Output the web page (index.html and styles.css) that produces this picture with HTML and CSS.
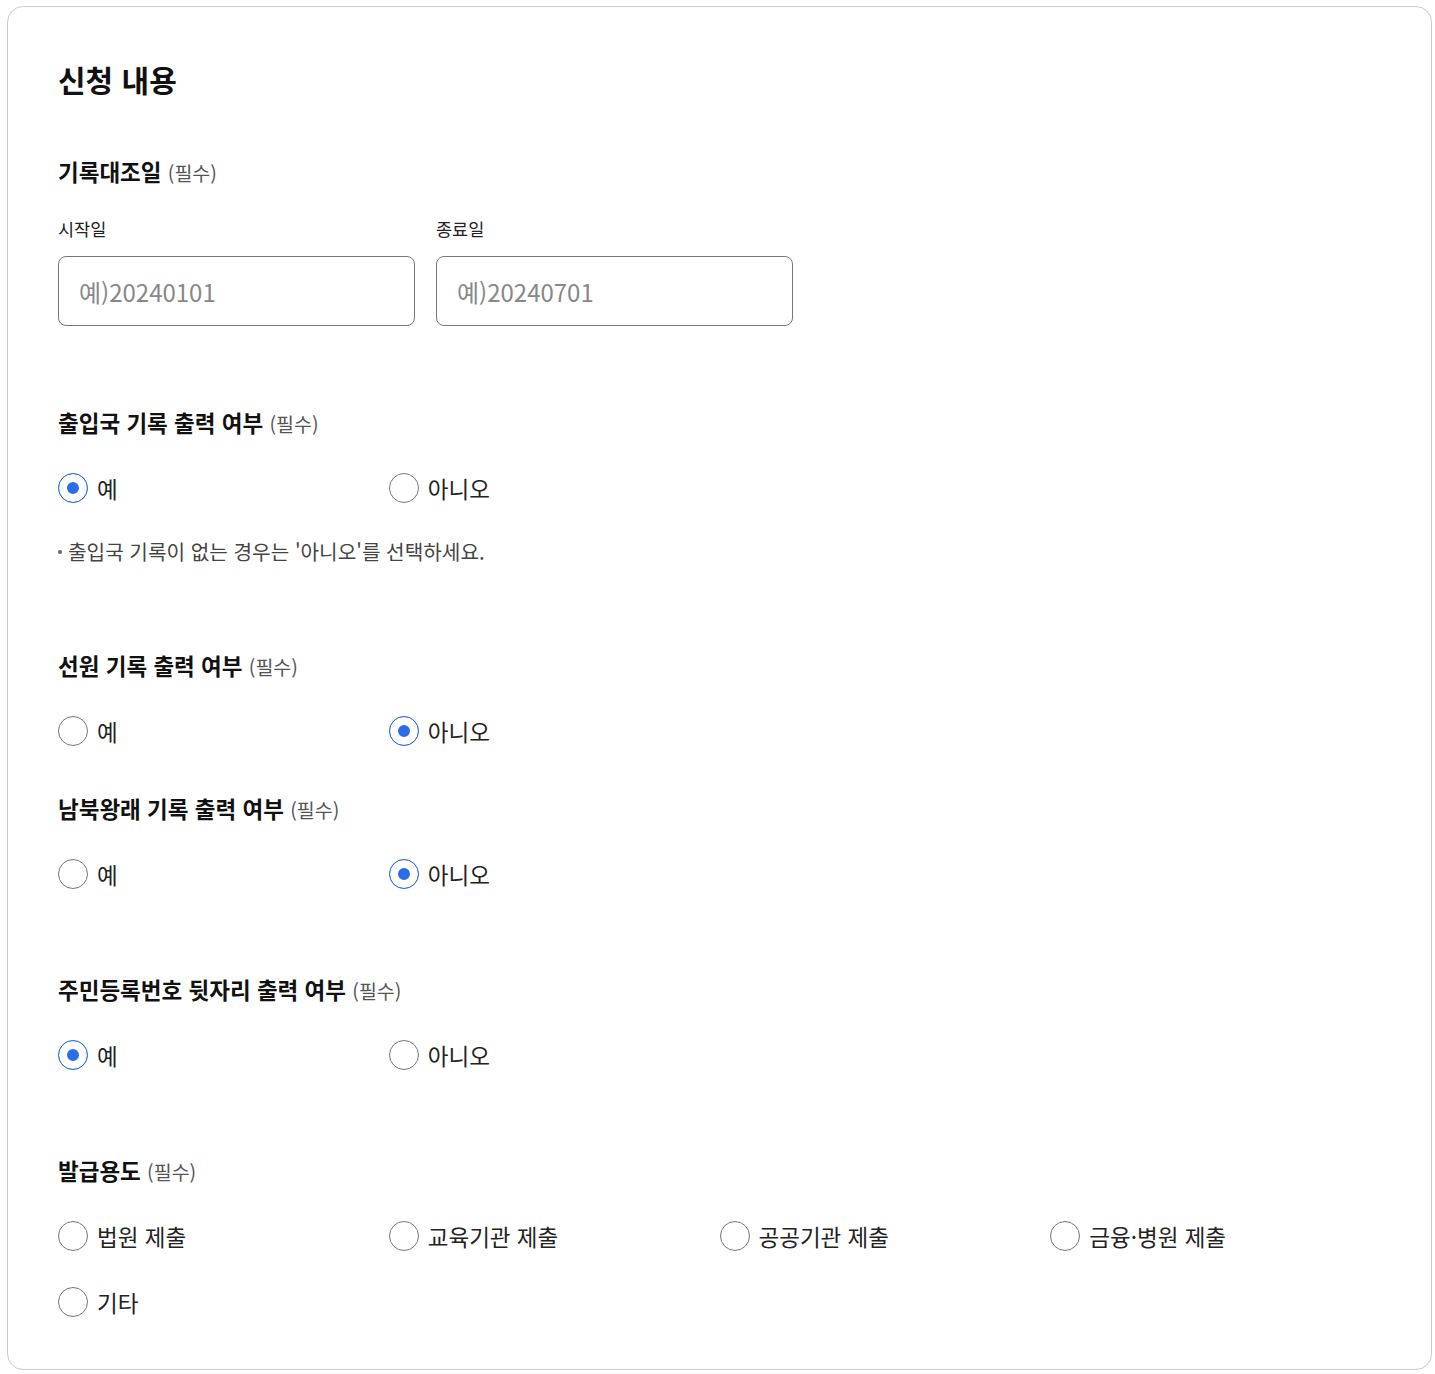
FILE: index.html
```html
<!DOCTYPE html>
<html lang="ko">
<head>
    <meta charset="UTF-8">
    <meta name="viewport" content="width=device-width, initial-scale=1.0">
    <title>신청 내용</title>
    <link rel="stylesheet" href="styles.css">
</head>
<body>
    <div class="card">
        <h2 class="card-title">신청 내용</h2>

        <!-- 기록대조일 -->
        <div class="section first">
            <h3 class="field-title">기록대조일 <span class="required">(필수)</span></h3>
            <div class="date-row">
                <div class="date-field">
                    <label for="startDate">시작일</label>
                    <input type="text" id="startDate" name="startDate" placeholder="예)20240101">
                </div>
                <div class="date-field">
                    <label for="endDate">종료일</label>
                    <input type="text" id="endDate" name="endDate" placeholder="예)20240701">
                </div>
            </div>
        </div>

        <!-- 출입국 기록 -->
        <div class="section after-input">
            <h3 class="field-title">출입국 기록 출력 여부 <span class="required">(필수)</span></h3>
            <div class="options">
                <label class="option"><input type="radio" name="immigration" value="Y" checked><span>예</span></label>
                <label class="option"><input type="radio" name="immigration" value="N"><span>아니오</span></label>
            </div>
            <ul class="notes">
                <li>출입국 기록이 없는 경우는 '아니오'를 선택하세요.</li>
            </ul>
        </div>

        <!-- 선원 기록 -->
        <div class="section">
            <h3 class="field-title">선원 기록 출력 여부 <span class="required">(필수)</span></h3>
            <div class="options">
                <label class="option"><input type="radio" name="seaman" value="Y"><span>예</span></label>
                <label class="option"><input type="radio" name="seaman" value="N" checked><span>아니오</span></label>
            </div>
        </div>

        <!-- 남북왕래 기록 -->
        <div class="section tight">
            <h3 class="field-title">남북왕래 기록 출력 여부 <span class="required">(필수)</span></h3>
            <div class="options">
                <label class="option"><input type="radio" name="interkorean" value="Y"><span>예</span></label>
                <label class="option"><input type="radio" name="interkorean" value="N" checked><span>아니오</span></label>
            </div>
        </div>

        <!-- 주민등록번호 뒷자리 -->
        <div class="section">
            <h3 class="field-title">주민등록번호 뒷자리 출력 여부 <span class="required">(필수)</span></h3>
            <div class="options">
                <label class="option"><input type="radio" name="rrn" value="Y" checked><span>예</span></label>
                <label class="option"><input type="radio" name="rrn" value="N"><span>아니오</span></label>
            </div>
        </div>

        <!-- 발급용도 -->
        <div class="section">
            <h3 class="field-title">발급용도 <span class="required">(필수)</span></h3>
            <div class="options">
                <label class="option"><input type="radio" name="purpose" value="court"><span>법원 제출</span></label>
                <label class="option"><input type="radio" name="purpose" value="school"><span>교육기관 제출</span></label>
                <label class="option"><input type="radio" name="purpose" value="public"><span>공공기관 제출</span></label>
                <label class="option"><input type="radio" name="purpose" value="bank"><span>금융·병원 제출</span></label>
                <label class="option"><input type="radio" name="purpose" value="etc"><span>기타</span></label>
            </div>
        </div>
    </div>
</body>
</html>
```

FILE: styles.css
```css
body {
    margin: 0;
    padding: 6px 4px 0 7px;
    font-family: "Noto Sans CJK KR", sans-serif;
    color: #222;
    background-color: #ffffff;
}

.card {
    width: 1425px;
    height: 1364px;
    box-sizing: border-box;
    border: 1px solid #cccccc;
    border-radius: 16px;
    padding: 52px 50px 0 50px;
}

.card-title {
    margin: 0;
    font-size: 30px;
    line-height: 40px;
    font-weight: 700;
    color: #111;
}

.section {
    margin-top: 85px;
}

.section.first {
    margin-top: 57px;
}

.section.after-input {
    margin-top: 81px;
}

.section.tight {
    margin-top: 47px;
}

.field-title {
    margin: 0 0 34px 0;
    font-size: 22.5px;
    line-height: 30px;
    font-weight: 700;
    color: #111;
}

.field-title .required {
    font-size: 19.5px;
    font-weight: 400;
    color: #555;
}

.date-row {
    display: flex;
    gap: 21px;
    margin-top: -3px;
}

.date-field {
    display: flex;
    flex-direction: column;
    gap: 17px;
    width: 357px;
}

.date-field label {
    font-size: 17.5px;
    line-height: 20px;
    color: #222;
}

.date-field input {
    height: 70px;
    box-sizing: border-box;
    border: 1px solid #777777;
    border-radius: 8px;
    padding: 0 20px;
    font-family: inherit;
    font-size: 24px;
    color: #222;
    outline: none;
}

.date-field input::placeholder {
    color: #888888;
}

.options {
    display: grid;
    grid-template-columns: repeat(4, 1fr);
    row-gap: 36px;
}

.option {
    display: flex;
    align-items: center;
    gap: 9px;
    height: 30px;
    font-size: 22.5px;
    color: #222;
    cursor: pointer;
}

.option input {
    appearance: none;
    -webkit-appearance: none;
    margin: 0;
    width: 30px;
    height: 30px;
    flex-shrink: 0;
    border: 1px solid #767676;
    border-radius: 50%;
    background-color: #fff;
}

.option input:checked {
    border-color: #2b6de8;
    background-color: #2b6de8;
    box-shadow: inset 0 0 0 8px #fff;
}

.notes {
    list-style: none;
    margin: 36px 0 0 0;
    padding: 0;
}

.notes li {
    position: relative;
    padding-left: 10px;
    font-size: 20.2px;
    line-height: 26px;
    color: #444;
}

.notes li::before {
    content: "";
    position: absolute;
    left: 0;
    top: 11px;
    width: 4px;
    height: 4px;
    border-radius: 50%;
    background-color: #666;
}
```
